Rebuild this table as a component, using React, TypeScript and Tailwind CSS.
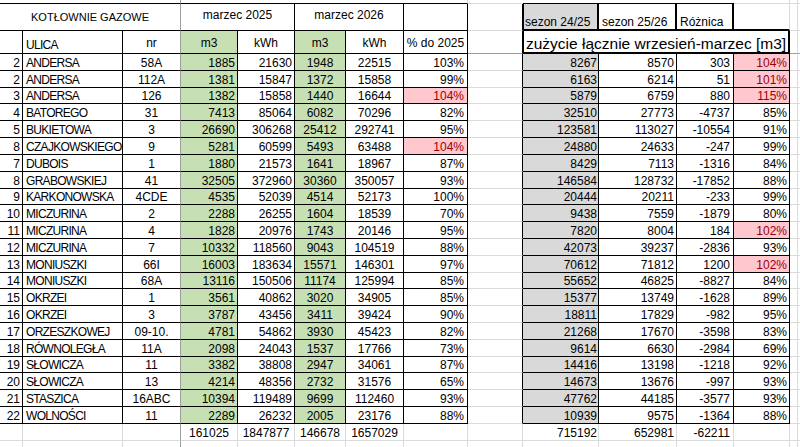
import React from "react";

type Row = {
  n: number;
  street: string;
  nr: string;
  m25: number;
  k25: number;
  m26: number;
  k26: number;
  pct: number;
  pctHigh?: boolean;
  s24: number;
  s25: number;
  diff: number;
  sPct: number;
  sHigh?: boolean;
};

const rows: Row[] = [
  { n: 2, street: "ANDERSA", nr: "58A", m25: 1885, k25: 21630, m26: 1948, k26: 22515, pct: 103, s24: 8267, s25: 8570, diff: 303, sPct: 104, sHigh: true },
  { n: 2, street: "ANDERSA", nr: "112A", m25: 1381, k25: 15847, m26: 1372, k26: 15858, pct: 99, s24: 6163, s25: 6214, diff: 51, sPct: 101, sHigh: true },
  { n: 3, street: "ANDERSA", nr: "126", m25: 1382, k25: 15858, m26: 1440, k26: 16644, pct: 104, pctHigh: true, s24: 5879, s25: 6759, diff: 880, sPct: 115, sHigh: true },
  { n: 4, street: "BATOREGO", nr: "31", m25: 7413, k25: 85064, m26: 6082, k26: 70296, pct: 82, s24: 32510, s25: 27773, diff: -4737, sPct: 85 },
  { n: 5, street: "BUKIETOWA", nr: "3", m25: 26690, k25: 306268, m26: 25412, k26: 292741, pct: 95, s24: 123581, s25: 113027, diff: -10554, sPct: 91 },
  { n: 8, street: "CZAJKOWSKIEGO", nr: "9", m25: 5281, k25: 60599, m26: 5493, k26: 63488, pct: 104, pctHigh: true, s24: 24880, s25: 24633, diff: -247, sPct: 99 },
  { n: 7, street: "DUBOIS", nr: "1", m25: 1880, k25: 21573, m26: 1641, k26: 18967, pct: 87, s24: 8429, s25: 7113, diff: -1316, sPct: 84 },
  { n: 8, street: "GRABOWSKIEJ", nr: "41", m25: 32505, k25: 372960, m26: 30360, k26: 350057, pct: 93, s24: 146584, s25: 128732, diff: -17852, sPct: 88 },
  { n: 9, street: "KARKONOWSKA", nr: "4CDE", m25: 4535, k25: 52039, m26: 4514, k26: 52173, pct: 100, s24: 20444, s25: 20211, diff: -233, sPct: 99 },
  { n: 10, street: "MICZURINA", nr: "2", m25: 2288, k25: 26255, m26: 1604, k26: 18539, pct: 70, s24: 9438, s25: 7559, diff: -1879, sPct: 80 },
  { n: 11, street: "MICZURINA", nr: "4", m25: 1828, k25: 20976, m26: 1743, k26: 20146, pct: 95, s24: 7820, s25: 8004, diff: 184, sPct: 102, sHigh: true },
  { n: 12, street: "MICZURINA", nr: "7", m25: 10332, k25: 118560, m26: 9043, k26: 104519, pct: 88, s24: 42073, s25: 39237, diff: -2836, sPct: 93 },
  { n: 13, street: "MONIUSZKI", nr: "66I", m25: 16003, k25: 183634, m26: 15571, k26: 146301, pct: 97, s24: 70612, s25: 71812, diff: 1200, sPct: 102, sHigh: true },
  { n: 14, street: "MONIUSZKI", nr: "68A", m25: 13116, k25: 150506, m26: 11174, k26: 125994, pct: 85, s24: 55652, s25: 46825, diff: -8827, sPct: 84 },
  { n: 15, street: "OKRZEI", nr: "1", m25: 3561, k25: 40862, m26: 3020, k26: 34905, pct: 85, s24: 15377, s25: 13749, diff: -1628, sPct: 89 },
  { n: 16, street: "OKRZEI", nr: "3", m25: 3787, k25: 43456, m26: 3411, k26: 39424, pct: 90, s24: 18811, s25: 17829, diff: -982, sPct: 95 },
  { n: 17, street: "ORZESZKOWEJ", nr: "09-10.", m25: 4781, k25: 54862, m26: 3930, k26: 45423, pct: 82, s24: 21268, s25: 17670, diff: -3598, sPct: 83 },
  { n: 18, street: "RÓWNOLEGŁA", nr: "11A", m25: 2098, k25: 24043, m26: 1537, k26: 17766, pct: 73, s24: 9614, s25: 6630, diff: -2984, sPct: 69 },
  { n: 19, street: "SŁOWICZA", nr: "11", m25: 3382, k25: 38808, m26: 2947, k26: 34061, pct: 87, s24: 14416, s25: 13198, diff: -1218, sPct: 92 },
  { n: 20, street: "SŁOWICZA", nr: "13", m25: 4214, k25: 48356, m26: 2732, k26: 31576, pct: 65, s24: 14673, s25: 13676, diff: -997, sPct: 93 },
  { n: 21, street: "STASZICA", nr: "16ABC", m25: 10394, k25: 119489, m26: 9699, k26: 112460, pct: 93, s24: 47762, s25: 44185, diff: -3577, sPct: 93 },
  { n: 22, street: "WOLNOŚCI", nr: "11", m25: 2289, k25: 26232, m26: 2005, k26: 23176, pct: 88, s24: 10939, s25: 9575, diff: -1364, sPct: 88 },
];

const GRID =
  "grid grid-cols-[23px_100px_58px_57px_57px_51px_58px_64px_55px_76px_78px_57px_56px_8px_1fr]";

// border sides (width + colour together, so nothing collides)
const BR = "border-r border-r-black";
const BB = "border-b border-b-black";
const GR = "border-r border-r-[#dadada]";
const GB = "border-b border-b-[#dadada]";
const FR = "border-r border-r-[#9e9e9e]";
const FB = "border-b border-b-[#9e9e9e]";
const TR = "border-r-2 border-r-black";
const TB = "border-b-2 border-b-black";

const PINK = "bg-[#ffc7ce] text-[#9c0006]";
const GREEN = "bg-[#c6e0b4]";
const GRAY = "bg-[#d9d9d9]";

function Cell({
  r = GR,
  b = GB,
  cls = "",
  children,
}: {
  r?: string;
  b?: string;
  cls?: string;
  children?: React.ReactNode;
}) {
  return (
    <div className={`flex overflow-hidden whitespace-nowrap ${r} ${b} ${cls}`}>
      {children}
    </div>
  );
}

const App = () => {
  return (
    <div className="h-[447px] w-[800px] overflow-hidden bg-white font-['Liberation_Sans',Arial,sans-serif] text-[12px] leading-[14px] text-black">
      {/* sliver of the row above */}
      <div className={`${GRID} h-[4px]`}>
        <Cell r="" b={BB} />
        <Cell r="" b={BB} />
        <Cell r={FR} b={BB} />
        <Cell r="" b={BB} />
        <Cell r="" b={BB} />
        <Cell r="" b={BB} />
        <Cell r="" b={BB} />
        <Cell r={GR} b={BB} />
        <Cell r="" b={GB} />
        <Cell r="" b={BB} />
        <Cell r="" b={BB} />
        <Cell r="" b={BB} />
        <Cell r={GR} b={GB} />
        <Cell r={GR} b={GB} />
        <Cell r="" b={GB} />
      </div>

      {/* header row 1 */}
      <div className={`${GRID} h-[27px]`}>
        <Cell r={FR} b={BB} cls="col-span-3 items-start justify-center pt-[7px] text-[11px] leading-[13px]">
          KOTŁOWNIE GAZOWE
        </Cell>
        <Cell r={BR} b={BB} cls="col-span-2 items-start justify-center pt-[4px]">
          marzec 2025
        </Cell>
        <Cell r={BR} b={BB} cls="col-span-2 items-start justify-center pt-[4px]">
          marzec 2026
        </Cell>
        <Cell r={BR} b={BB} />
        <Cell r={BR} b={GB} />
        <Cell r={TR} b={TB} cls={`border-l border-l-black items-end pl-[1px] ${GRAY}`}>
          sezon 24/25
        </Cell>
        <Cell r={TR} b={TB} cls="items-end pl-[3px]">
          sezon 25/26
        </Cell>
        <Cell r={TR} b={TB} cls="items-end pl-[3px]">
          Różnica
        </Cell>
        <Cell r={GR} b={TB} />
        <Cell r={GR} b={GB} />
        <Cell r="" b={GB} />
      </div>

      {/* header row 2 */}
      <div className={`${GRID} h-[23px]`}>
        <Cell r={BR} b={BB} />
        <Cell r={BR} b={BB} cls="items-end pb-[1px] pl-[3px] tracking-[-0.7px]">
          ULICA
        </Cell>
        <Cell r={FR} b={BB} cls="items-end justify-center pb-[3px]">
          nr
        </Cell>
        <Cell r={BR} b={BB} cls={`items-end justify-center pb-[3px] ${GREEN}`}>
          m3
        </Cell>
        <Cell r={BR} b={BB} cls="items-end justify-center pb-[3px]">
          kWh
        </Cell>
        <Cell r={BR} b={BB} cls={`items-end justify-center pb-[3px] ${GREEN}`}>
          m3
        </Cell>
        <Cell r={BR} b={BB} cls="items-end justify-center pb-[3px]">
          kWh
        </Cell>
        <Cell r={BR} b={BB} cls="items-end justify-center pb-[3px]">
          % do 2025
        </Cell>
        <Cell r={BR} b={FB} />
        <Cell r={TR} b={TB} cls="col-span-4 border-l border-l-black items-end pl-[2px] text-[15.5px] leading-[16px]">
          zużycie łącznie wrzesień-marzec [m3]
        </Cell>
        <Cell r={GR} b={FB} />
        <Cell r="" b={FB} />
      </div>

      {/* data */}
      {rows.map((row, i) => (
        <div key={i} className={`${GRID} h-[16.82px]`}>
          <Cell r={BR} b={BB} cls="items-end justify-end pr-[2px]">
            {row.n}
          </Cell>
          <Cell r={BR} b={BB} cls="items-end pl-[3px] tracking-[-0.7px]">
            {row.street}
          </Cell>
          <Cell r={FR} b={BB} cls="items-end justify-center">
            {row.nr}
          </Cell>
          <Cell r={BR} b={BB} cls={`items-end justify-end pr-[2px] ${GREEN}`}>
            {row.m25}
          </Cell>
          <Cell r={BR} b={BB} cls="items-end justify-end pr-[2px]">
            {row.k25}
          </Cell>
          <Cell r={BR} b={BB} cls={`items-end justify-center ${GREEN}`}>
            {row.m26}
          </Cell>
          <Cell r={BR} b={BB} cls="items-end justify-center">
            {row.k26}
          </Cell>
          <Cell r={BR} b={BB} cls={`items-end justify-end pr-[3px] ${row.pctHigh ? PINK : ""}`}>
            {row.pct}%
          </Cell>
          <Cell r={BR} b={GB} />
          <Cell r={BR} b={BB} cls={`items-end justify-end pr-[1px] ${GRAY}`}>
            {row.s24}
          </Cell>
          <Cell r={BR} b={BB} cls="items-end justify-end pr-[2px]">
            {row.s25}
          </Cell>
          <Cell r={BR} b={BB} cls="items-end justify-end pr-[3px]">
            {row.diff}
          </Cell>
          <Cell r={BR} b={BB} cls={`items-end justify-end pr-[2px] ${row.sHigh ? PINK : ""}`}>
            {row.sPct}%
          </Cell>
          <Cell r={GR} b={GB} />
          <Cell r="" b={GB} />
        </div>
      ))}

      {/* totals */}
      <div className={`${GRID} h-[17px]`}>
        <Cell />
        <Cell />
        <Cell r={FR} />
        <Cell cls="items-end justify-center">161025</Cell>
        <Cell cls="items-end justify-center">1847877</Cell>
        <Cell cls="items-end justify-center">146678</Cell>
        <Cell cls="items-end justify-center">1657029</Cell>
        <Cell />
        <Cell />
        <Cell cls="items-end justify-end pr-[1px]">715192</Cell>
        <Cell cls="items-end justify-end pr-[2px]">652981</Cell>
        <Cell cls="items-end justify-end pr-[3px]">-62211</Cell>
        <Cell />
        <Cell />
        <Cell r="" />
      </div>

      {/* next empty row */}
      <div className={`${GRID} h-[6px]`}>
        <Cell b="" />
        <Cell b="" />
        <Cell r={FR} b="" />
        <Cell b="" />
        <Cell b="" />
        <Cell b="" />
        <Cell b="" />
        <Cell b="" />
        <Cell b="" />
        <Cell b="" />
        <Cell b="" />
        <Cell b="" />
        <Cell b="" />
        <Cell b="" />
        <Cell r="" b="" />
      </div>
    </div>
  );
};

export default App;
